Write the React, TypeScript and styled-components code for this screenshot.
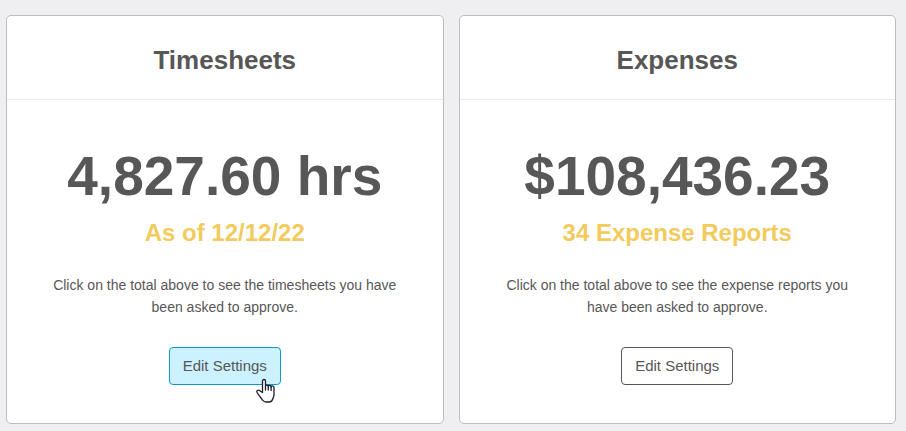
import React from "react";
import styled, { createGlobalStyle } from "styled-components";

const GlobalStyle = createGlobalStyle`
  *, *::before, *::after { box-sizing: border-box; }
  html { background: #efeff1; }
  body { margin: 0; color: #575757; font-family: "Liberation Sans", Arial, sans-serif; }
`;

const Dashboard = styled.main`
  display: grid;
  grid-template-columns: 1fr 1fr;
  gap: 15px;
  padding: 15px 10px 7px 6px;
`;

const Card = styled.section`
  background: #fff;
  border: 1px solid #bdbdbf;
  border-radius: 5px;
  text-align: center;
`;

const CardHeader = styled.header`
  padding: 28px 20px 23px;
  border-bottom: 1px solid #ececec;
`;

const Title = styled.h2`
  margin: 0;
  font-size: 26px;
  line-height: 32px;
`;

const CardBody = styled.div`
  display: flex;
  flex-direction: column;
  align-items: center;
  padding: 44px 44px 38px;
`;

const Total = styled.a`
  color: inherit;
  font-size: 55px;
  font-weight: 700;
  line-height: 64px;
  text-decoration: none;
  white-space: nowrap;
`;

const Detail = styled.p`
  margin: 10px 0 0;
  color: #f2cb5c;
  font-size: 24px;
  font-weight: 700;
  line-height: 30px;
`;

const Hint = styled.p`
  margin: 26px 0 0;
  font-size: 14px;
  line-height: 22px;
`;

const SettingsButton = styled.button<{ $highlighted?: boolean }>`
  position: relative;
  height: 38px;
  margin-top: 29px;
  padding: 0 13px;
  border: 1px solid ${(p) => (p.$highlighted ? "#1499c6" : "#575757")};
  border-radius: 4px;
  background: ${(p) => (p.$highlighted ? "#ccf2ff" : "#fff")};
  color: inherit;
  font: 15px/22px "Liberation Sans", Arial, sans-serif;
`;

const Pointer = styled.svg`
  position: absolute;
  right: 4px;
  top: 30px;
  pointer-events: none;
`;

const HandPointer = () => (
  <Pointer width="20" height="25" viewBox="0 0 20 25" aria-hidden="true">
    <path
      d="M6.500 14.500V3C6.500 1 9.500 1 9.500 3V8C9.500 6.500 12.300 6.500 12.300 8V8.500C12.300 7 15.100 7 15.100 8.500V9C15.100 7.500 18 7.500 18 9.500V17C18 19 17 20 16.500 21.500C16 23.300 15 24 13 24H10.500C8.500 24 7.300 23.300 6.500 22C4.500 19.500 2.500 17 1.300 14.800C0 12.500 2 11.500 3.500 12.500L6.500 14.500Z"
      fill="#fff"
      stroke="#1c1c2e"
      strokeWidth="1.300"
      strokeLinejoin="round"
    />
    <path d="M9.500 8v4M12.300 8.500v3.500M15.100 9v3.500" fill="none" stroke="#1c1c2e" strokeWidth="1.300" strokeLinecap="round" />
  </Pointer>
);

type Summary = { title: string; total: string; detail: string; hint: string; highlighted?: boolean };

const summaries: Summary[] = [
  {
    title: "Timesheets",
    total: "4,827.60 hrs",
    detail: "As of 12/12/22",
    hint: "Click on the total above to see the timesheets you have been asked to approve.",
    highlighted: true,
  },
  {
    title: "Expenses",
    total: "$108,436.23",
    detail: "34 Expense Reports",
    hint: "Click on the total above to see the expense reports you have been asked to approve.",
  },
];

export default function App() {
  return (
    <>
      <GlobalStyle />
      <Dashboard>
        {summaries.map((s) => (
          <Card key={s.title}>
            <CardHeader><Title>{s.title}</Title></CardHeader>
            <CardBody>
              <Total href="#">{s.total}</Total>
              <Detail>{s.detail}</Detail>
              <Hint>{s.hint}</Hint>
              <SettingsButton type="button" $highlighted={s.highlighted}>
                Edit Settings
                {s.highlighted && <HandPointer />}
              </SettingsButton>
            </CardBody>
          </Card>
        ))}
      </Dashboard>
    </>
  );
}
